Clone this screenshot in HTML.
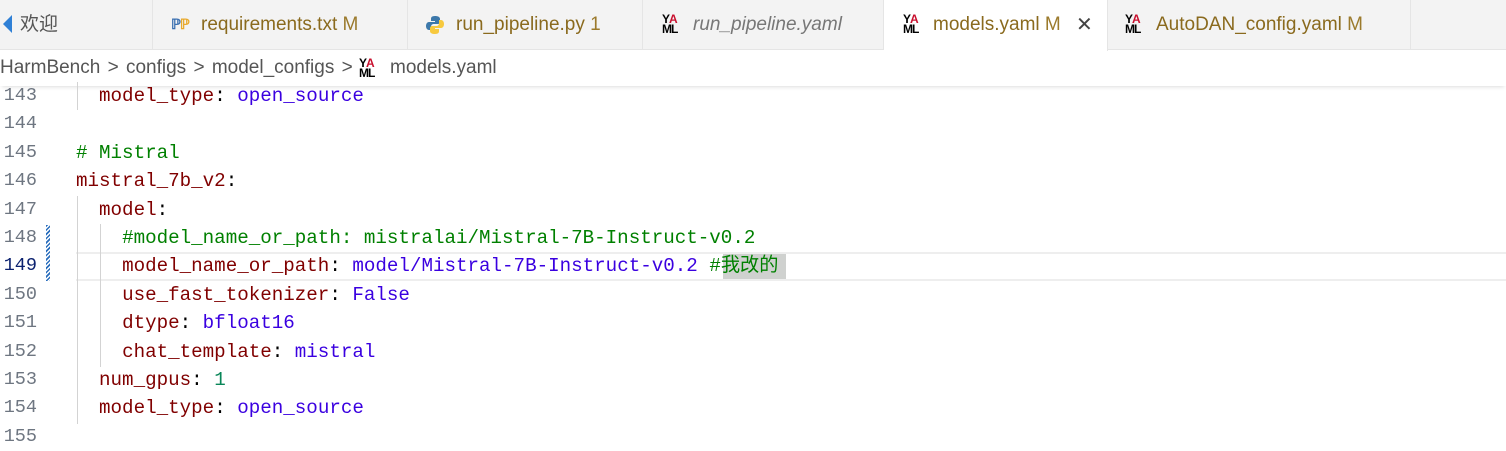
<!DOCTYPE html>
<html><head><meta charset="utf-8"><style>
*{margin:0;padding:0;box-sizing:border-box}
body{width:1506px;height:444px;overflow:hidden;background:#fff;font-family:"Liberation Sans","Noto Sans CJK SC",sans-serif;position:relative}
.tabs{position:absolute;left:0;top:0;width:1506px;height:50px;background:#f3f3f3;border-bottom:1px solid #e5e5e5}
.tab{position:absolute;top:0;height:50px;border-right:1px solid #e5e5e5;font-size:19px;line-height:50px;color:#333;white-space:nowrap}
.tab.act{background:#fff;height:51px}
.m{color:#9b7a2c}
.y{position:absolute;top:14px;font:bold 12px/10px "Liberation Sans",sans-serif;color:#000;width:22px;letter-spacing:-1px}
.y b{color:#c8102e}
.crumb{position:absolute;top:50px;left:0;width:1506px;height:36px;font-size:19px;line-height:36px;color:#555;box-shadow:0 3px 4px -2px #ddd}
.code{position:absolute;left:0;top:82px;font-family:"Liberation Mono","Noto Sans CJK SC",monospace;font-size:19.2px}
.ln{position:absolute;left:0;width:37px;text-align:right;color:#6e7681;font-size:18.5px}
.tx{position:absolute;left:76px;white-space:pre}
.k{color:#800000}.v{color:#3a00e0}.c{color:#008000}.n{color:#098658}
.g{position:absolute;width:1px;background:#d3d3d3}
</style></head><body>
<div class="tabs">
 <div class="tab" style="left:0;width:153px;padding-left:0">
  <svg style="position:absolute;left:0;top:15px" width="12" height="20"><path d="M12 0 L3 9 L12 18 Z" fill="#2f80d6"/></svg>
  <span style="position:absolute;left:20px;color:#555">欢迎</span></div>
 <div class="tab" style="left:153px;width:255px">
  <span style="position:absolute;left:18px;top:-1px;font:bold 14px/50px sans-serif;color:#3a6fb0;letter-spacing:-1px">ℙ<span style="color:#e8a92c">ℙ</span></span>
  <span style="position:absolute;left:48px;color:#8a6a1e">requirements.txt <span class="m">M</span></span></div>
 <div class="tab" style="left:408px;width:235px">
  <svg style="position:absolute;left:17px;top:15px" width="20" height="20"><path d="M10 1c-4 0-4 2-4 3v2h4v1H4c-2 0-3 2-3 4s1 4 3 4h2v-3c0-2 1-3 3-3h4c1 0 2-1 2-2V4c0-2-2-3-5-3z" fill="#3c78aa"/><path d="M10 19c4 0 4-2 4-3v-2h-4v-1h6c2 0 3-2 3-4s-1-4-3-4h-2v3c0 2-1 3-3 3H7c-1 0-2 1-2 2v3c0 2 2 3 5 3z" fill="#f7c93e"/></svg>
  <span style="position:absolute;left:48px;color:#8a6a1e">run_pipeline.py <span class="m">1</span></span></div>
 <div class="tab" style="left:643px;width:241px">
  <div class="y" style="left:19px">Y<b>A</b><br>ML</div>
  <span style="position:absolute;left:50px;color:#777;font-style:italic">run_pipeline.yaml</span></div>
 <div class="tab act" style="left:884px;width:224px">
  <div class="y" style="left:19px">Y<b>A</b><br>ML</div>
  <span style="position:absolute;left:49px;color:#8a6a1e">models.yaml <span class="m">M</span></span>
  <span style="position:absolute;left:192px;color:#444;font-size:20px">✕</span></div>
 <div class="tab" style="left:1108px;width:303px">
  <div class="y" style="left:17px">Y<b>A</b><br>ML</div>
  <span style="position:absolute;left:48px;color:#8a6a1e">AutoDAN_config.yaml <span class="m">M</span></span></div>
</div>
<div class="crumb"><span style="position:absolute;left:0;word-spacing:2px">HarmBench &gt; configs &gt; model_configs &gt;</span>
 <div class="y" style="left:359px;top:8px">Y<b>A</b><br>ML</div>
 <span style="position:absolute;left:390px">models.yaml</span></div>
<div class="code">
 <div style="position:absolute;left:76px;top:170px;width:1430px;height:29px;border-top:2px solid #eee;border-bottom:2px solid #eee"></div>
 <div style="position:absolute;left:46px;top:143px;width:4px;height:56px;background:repeating-linear-gradient(135deg,#2a6ebd 0 1.5px,#fff 1.5px 3px)"></div>
 <div class="g" style="left:77px;top:0;height:28px"></div>
 <div class="g" style="left:77px;top:114px;height:228px"></div>
 <div class="g" style="left:100px;top:142px;height:143px"></div>
 <div style="position:absolute;left:723px;top:172px;width:63px;height:25px;background:#cfd1cf"></div>
 <div class="ln" style="top:0;line-height:28.4px">143<br>144<br>145<br>146<br>147<br>148<br><span style="color:#0b216f">149</span><br>150<br>151<br>152<br>153<br>154<br>155</div>
 <div class="tx" style="top:0;line-height:28.4px">  <span class="k">model_type</span>: <span class="v">open_source</span>

<span class="c"># Mistral</span>
<span class="k">mistral_7b_v2</span>:
  <span class="k">model</span>:
    <span class="c">#model_name_or_path: mistralai/Mistral-7B-Instruct-v0.2</span>
    <span class="k">model_name_or_path</span>: <span class="v">model/Mistral-7B-Instruct-v0.2</span> <span class="c">#我改的</span>
    <span class="k">use_fast_tokenizer</span>: <span class="v">False</span>
    <span class="k">dtype</span>: <span class="v">bfloat16</span>
    <span class="k">chat_template</span>: <span class="v">mistral</span>
  <span class="k">num_gpus</span>: <span class="n">1</span>
  <span class="k">model_type</span>: <span class="v">open_source</span>
</div>
</div>
</body></html>
